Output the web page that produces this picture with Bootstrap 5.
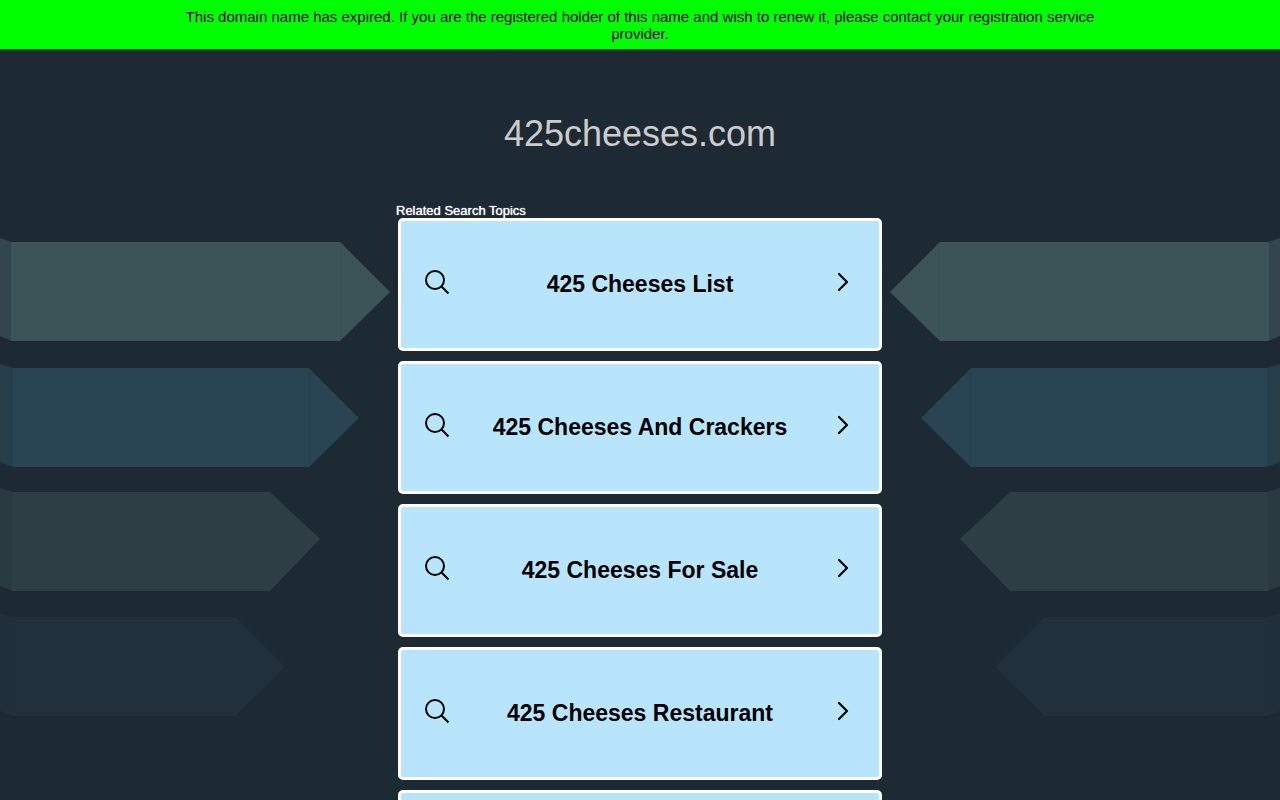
<!DOCTYPE html>
<html lang="en">
<head>
<meta charset="utf-8">
<meta name="viewport" content="width=device-width, initial-scale=1">
<title>425cheeses.com</title>
<link href="https://cdn.jsdelivr.net/npm/bootstrap@5.3.0/dist/css/bootstrap.min.css" rel="stylesheet">
<style>
body { background: #1e2a33; font-family: "Liberation Sans", Arial, sans-serif; }
.page { overflow: hidden; }
.notice { background: #0f0; color: #000; font-size: 15px; line-height: 17px; padding: 8px 0 7px; }
.notice p { width: 75%; }
.site-name { color: #ccc; font-size: 36px; line-height: 42px; padding: 64px 0 48px; }
.arrows { width: 390px; margin-top: 35px; }
.arrows.flip { transform: scaleX(-1); }
.topics { width: 484px; }
.topics-title { color: #fff; font-size: 13px; line-height: 15px; margin-left: -2px; text-shadow: 0 0 1px #fff; }
.topic-list { gap: 10px; }
.topic { height: 133px; background: #b8e5fc; border: 3px solid #fff; border-radius: 5px; color: #000; font-size: 23px; line-height: 28px; padding: 0 23px 2px; }
.topic:hover { background: #d2effd; color: #000; }
.topic svg { width: 26px; margin-bottom: 4px; }
</style>
</head>
<body>
<div class="page vh-100">
  <div class="notice text-center">
    <p class="mx-auto mb-0">This domain name has expired. If you are the registered holder of this name and wish to renew it, please contact your registration service provider.</p>
  </div>
  <h1 class="site-name text-center fw-normal mb-0">425cheeses.com</h1>

  <svg class="d-none" aria-hidden="true">
    <symbol id="search" viewBox="0 0 26 26"><g fill="none" stroke="#000" stroke-width="2"><circle cx="11" cy="11" r="9"/><path d="M17.3 17.3 24.5 24.5"/></g></symbol>
    <symbol id="chevron" viewBox="0 0 26 20"><path d="M9 2l8 8-8 8" fill="none" stroke="#000" stroke-width="2.2" stroke-linecap="round" stroke-linejoin="round"/></symbol>
    <symbol id="arrow-art" viewBox="0 0 390 480">
      <path fill="#34464d" d="M0 0l12 4v99L0 98z"/>
      <path fill="#3c5357" d="M11 4h329l50 50-50 49H11z"/>
      <path fill="#263d4a" d="M0 126l13 4v99L0 224z"/>
      <path fill="#294452" d="M13 130h296l50 50-50 49H13z"/>
      <path fill="#293a41" d="M0 250l13 4v99L0 348z"/>
      <path fill="#2d3f44" d="M12 254h258l50 47-50 52H12z"/>
      <path fill="#1f2f3b" d="M0 375l12 4v99L0 473z"/>
      <path fill="#20313d" d="M12 379h223l50 50-50 49H12z"/>
      <path fill="none" stroke="#394f54" d="M340.500 5v97"/>
      <path fill="none" stroke="#27414e" d="M309.500 131v97"/>
    </symbol>
  </svg>

  <div class="d-flex justify-content-between align-items-start">
    <svg class="arrows flex-shrink-1" height="480" aria-hidden="true"><use href="#arrow-art"/></svg>
    <main class="topics flex-shrink-0">
      <h2 class="topics-title fw-normal mb-0">Related Search Topics</h2>
      <nav class="topic-list d-flex flex-column" aria-label="Related Search Topics">
        <a class="topic d-flex align-items-center justify-content-between fw-bold text-decoration-none" href="#"><svg height="26" aria-hidden="true"><use href="#search"/></svg><span>425 Cheeses List</span><svg height="20" aria-hidden="true"><use href="#chevron"/></svg></a>
        <a class="topic d-flex align-items-center justify-content-between fw-bold text-decoration-none" href="#"><svg height="26" aria-hidden="true"><use href="#search"/></svg><span>425 Cheeses And Crackers</span><svg height="20" aria-hidden="true"><use href="#chevron"/></svg></a>
        <a class="topic d-flex align-items-center justify-content-between fw-bold text-decoration-none" href="#"><svg height="26" aria-hidden="true"><use href="#search"/></svg><span>425 Cheeses For Sale</span><svg height="20" aria-hidden="true"><use href="#chevron"/></svg></a>
        <a class="topic d-flex align-items-center justify-content-between fw-bold text-decoration-none" href="#"><svg height="26" aria-hidden="true"><use href="#search"/></svg><span>425 Cheeses Restaurant</span><svg height="20" aria-hidden="true"><use href="#chevron"/></svg></a>
        <a class="topic d-flex" href="#" aria-label="More topics"></a>
      </nav>
    </main>
    <svg class="arrows flip flex-shrink-1" height="480" aria-hidden="true"><use href="#arrow-art"/></svg>
  </div>
</div>
<script src="https://cdn.jsdelivr.net/npm/bootstrap@5.3.0/dist/js/bootstrap.bundle.min.js"></script>
</body>
</html>
